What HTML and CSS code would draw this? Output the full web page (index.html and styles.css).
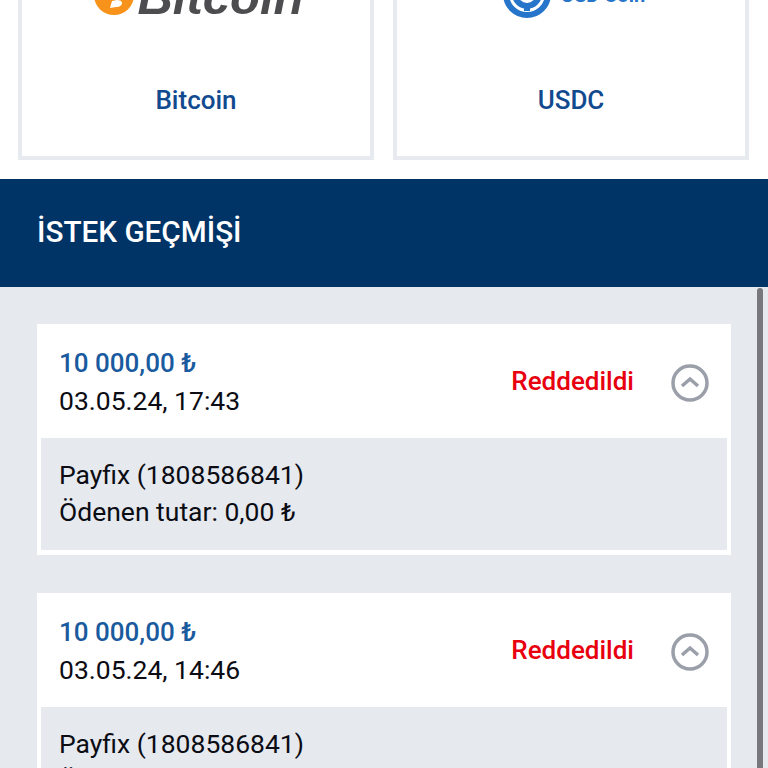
FILE: index.html
```html
<!DOCTYPE html>
<html lang="en">
<head>
    <meta charset="UTF-8">
    <meta name="viewport" content="width=device-width, initial-scale=1.0">
    <title>İstek Geçmişi</title>
    <link rel="stylesheet" href="styles.css">
</head>
<body>
    <div class="page">

        <!-- Payment methods -->
        <section class="methods">
            <div class="method">
                <div class="method-logo">
                    <svg class="coin" width="40" height="40" viewBox="0 0 40 40">
                        <circle cx="20" cy="20" r="20" fill="#f7931a"/>
                        <path d="M16 33l6-1c4 0 6-2 6-4 0-2-2-3-5-3l-5 1z" fill="#fff"/>
                    </svg>
                    <span class="bitcoin-name">Bitcoin</span>
                </div>
                <div class="method-name">Bitcoin</div>
            </div>
            <div class="method">
                <div class="method-logo usdc-logo">
                    <svg class="coin" width="48" height="48" viewBox="0 0 48 48">
                        <circle cx="24" cy="24" r="21" fill="none" stroke="#2775ca" stroke-width="6"/>
                        <circle cx="24" cy="24" r="12" fill="none" stroke="#2775ca" stroke-width="6"/>
                        <path d="M21 33h6v8h-6z" fill="#2775ca"/>
                        <path d="M24 21l5 7-5 5-5-5z" fill="#fff"/>
                    </svg>
                    <span class="usdc-name">USD Coin</span>
                </div>
                <div class="method-name">USDC</div>
            </div>
        </section>

        <!-- Header -->
        <header class="history-header">
            <h1>İSTEK GEÇMİŞİ</h1>
        </header>

        <!-- Request history -->
        <section class="history">
            <div class="scrollbar"></div>

            <div class="request">
                <div class="request-top">
                    <div class="request-info">
                        <div class="amount">10 000,00 ₺</div>
                        <div>03.05.24, 17:43</div>
                    </div>
                    <div class="status">Reddedildi</div>
                    <svg class="toggle" width="38" height="38" viewBox="0 0 38 38">
                        <circle cx="19" cy="19" r="17" fill="none" stroke="#9b9fa9" stroke-width="3.5"/>
                        <path d="M11 22l8-7 8 7" fill="none" stroke="#9b9fa9" stroke-width="3.5"/>
                    </svg>
                </div>
                <div class="request-detail">
                    <div>Payfix (1808586841)</div>
                    <div>Ödenen tutar: 0,00 ₺</div>
                </div>
            </div>

            <div class="request">
                <div class="request-top">
                    <div class="request-info">
                        <div class="amount">10 000,00 ₺</div>
                        <div>03.05.24, 14:46</div>
                    </div>
                    <div class="status">Reddedildi</div>
                    <svg class="toggle" width="38" height="38" viewBox="0 0 38 38">
                        <circle cx="19" cy="19" r="17" fill="none" stroke="#9b9fa9" stroke-width="3.5"/>
                        <path d="M11 22l8-7 8 7" fill="none" stroke="#9b9fa9" stroke-width="3.5"/>
                    </svg>
                </div>
                <div class="request-detail">
                    <div>Payfix (1808586841)</div>
                    <div>Ödenen tutar: 0,00 ₺</div>
                </div>
            </div>
        </section>

    </div>
</body>
</html>
```

FILE: styles.css
```css
html, body {
    height: 100%;
    overflow: hidden;
}

body {
    font-family: Roboto, "Liberation Sans", sans-serif;
    font-size: 26.5px;
    line-height: 37px;
    background-color: #ffffff;
    margin: 0;
    padding: 0;
    color: #0b0c14;
}

/* the screenshot is scrolled down a little */
.page {
    margin-top: -40px;
}

.methods {
    display: grid;
    grid-template-columns: 356px 356px;
    gap: 19px;
    padding: 0 19px 19px 18px;
}

.method {
    height: 200px;
    box-sizing: border-box;
    border: 4px solid #e7eaef;
    display: flex;
    flex-direction: column;
    align-items: center;
}

.method-logo {
    height: 51px;
    margin-bottom: 3px;
    display: flex;
    align-items: flex-end;
    gap: 3px;
    transform: translateX(3px);
}

.coin {
    flex: none;
}

.bitcoin-name {
    font-family: "Liberation Sans", sans-serif;
    font-size: 49px;
    font-weight: bold;
    font-style: italic;
    line-height: 35px;
    color: #4d4d4f;
}

.usdc-logo {
    height: 54px;
    margin-bottom: 0;
    gap: 10px;
}

.usdc-name {
    font-size: 20px;
    font-weight: bold;
    line-height: 20px;
    color: #2775ca;
    margin-bottom: 13px;
}

.method-name {
    margin-top: 64px;
    font-size: 26px;
    font-weight: 500;
    color: #124a8f;
}

.history-header {
    background-color: #003366;
    color: #ffffff;
    height: 108px;
    display: flex;
    align-items: center;
    padding: 0 37px 3px;
    box-sizing: border-box;
}

.history-header h1 {
    margin: 0;
    font-size: 29.7px;
    font-weight: 500;
}

.history {
    position: relative;
    background-color: #e6e9ee;
    padding: 37px;
    display: flex;
    flex-direction: column;
    gap: 38px;
}

.scrollbar {
    position: absolute;
    top: 1px;
    bottom: 0;
    right: 5px;
    width: 6px;
    border-radius: 3px 3px 0 0;
    background-color: #77777d;
}

.request {
    background-color: #ffffff;
    padding: 0 4px 5px;
}

.request-top {
    height: 114px;
    box-sizing: border-box;
    padding: 1px 18px 0;
    display: flex;
    align-items: center;
}

.request-info {
    flex: 1;
}

.amount {
    color: #1a5a9e;
    font-size: 26px;
    font-weight: 500;
}

.status {
    color: #e8000f;
    font-size: 26px;
    font-weight: 500;
    margin-right: 37px;
}

.toggle {
    flex: none;
    margin-top: 3px;
}

.request-detail {
    background-color: #e6e9ee;
    height: 112px;
    box-sizing: border-box;
    padding: 18px;
}
```
